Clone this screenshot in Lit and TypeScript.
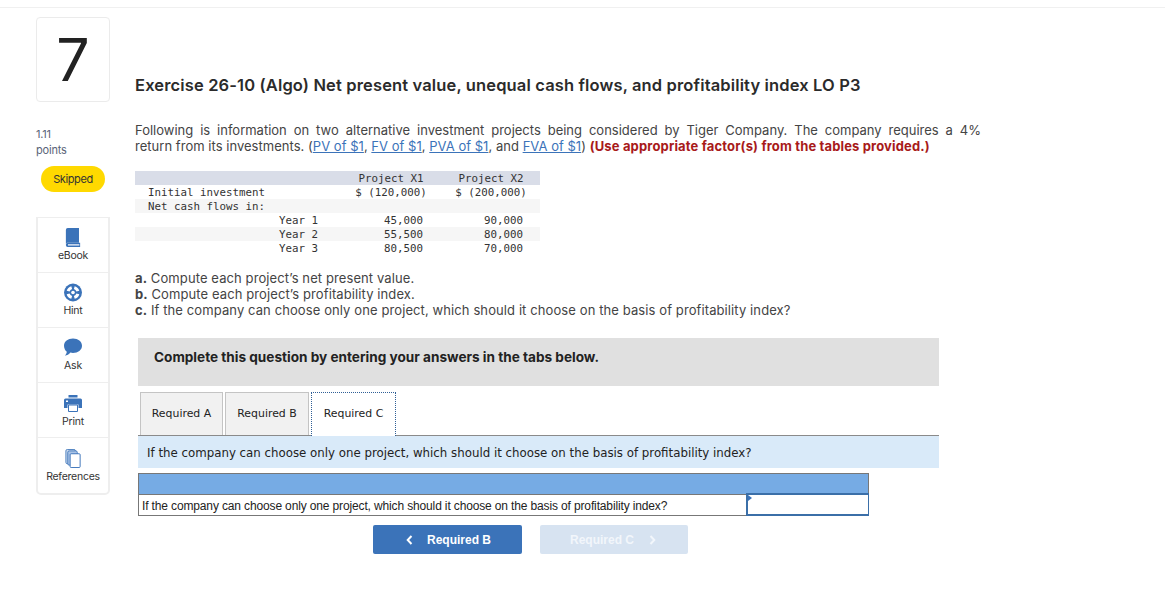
import { LitElement, html, css, svg } from "lit";
import { customElement } from "lit/decorators.js";

const hintWindow = "M15.300 10.700A6.500 6.500 0 0 1 10.700 15.300L9.910 12.380A3.500 3.500 0 0 0 12.380 9.910Z";

const icons: Record<string, unknown> = {
  eBook: svg`<svg width="16" height="20" viewBox="0 0 16 20"><path d="M.5 2a2 2 0 0 1 2-2h11.800v15.500H2.500a2 2 0 0 0-2 1.200z" fill="#3b73b9"/><path d="M.5 17.500a2 2 0 0 1 2-2h13V20H2.500a2 2 0 0 1-2-2z" fill="#3b73b9"/><path d="M2.700 17h12v1.500h-12z" fill="#dfe8f4"/></svg>`,
  Hint: svg`<svg width="18" height="18" viewBox="0 0 18 18"><circle cx="9" cy="9" r="9" fill="#3b73b9"/>${[0, 90, 180, 270].map((a) => svg`<path d=${hintWindow} transform="rotate(${a} 9 9)" fill="#fff"/>`)}<circle cx="9" cy="9" r="1.800" fill="#fff"/></svg>`,
  Ask: svg`<svg width="18" height="18" viewBox="0 0 18 18"><path d="M9 0c5 0 9 3 9 7.200s-4 7.200-9 7.200c-1 0-1.800-.1-2.600-.3C5 16 3 17 .8 17.300c1-1 1.800-2.300 2-4C1.200 12 0 9.800 0 7.200 0 3 4 0 9 0z" fill="#3b73b9"/></svg>`,
  Print: svg`<svg width="18" height="17" viewBox="0 0 18 17"><path d="M4.500 0h9v2.500h-9z" fill="#3b73b9"/><path d="M1.500 3.500h15A1.500 1.500 0 0 1 18 5v8h-3.500V9.500h-11V13H0V5a1.500 1.500 0 0 1 1.500-1.500z" fill="#3b73b9"/><path d="M2 5.500h2v1.500H2z" fill="#fff"/><path d="M4.500 10h9V16.500h-9z" fill="#fff" stroke="#3b73b9"/></svg>`,
  References: svg`<svg width="16" height="20" viewBox="0 0 16 20"><rect x=".5" y=".5" width="10" height="15" rx="1.500" fill="#cfdcee" stroke="#3b73b9" stroke-width=".9"/><rect x="2.500" y="2" width="10" height="15" rx="1.500" fill="#a9c3e6" stroke="#3b73b9" stroke-width=".9"/><rect x="5" y="5" width="10.500" height="14.500" rx="1" fill="#fff" stroke="#3b73b9"/></svg>`,
};

@customElement("app-root")
export class AppRoot extends LitElement {
  static styles = css`
    :host { display: block; font-family: "Inter", "Open Sans", sans-serif; color: #333; width: 1165px; height: 614px; overflow: hidden; background: #fff; }
    .page { margin-top: 7px; border-top: 1px solid #f0f0f0; display: flex; padding: 9px 0 0 36px; }
    .side { width: 74px; flex: none; margin-right: 25px; }
    .num { border: 1px solid #ebebeb; border-radius: 4px; display: flex; align-items: center; justify-content: center; font: 400 59px "Inter", "Liberation Sans", sans-serif; color: #222; box-sizing: border-box; height: 85px; }
    .pts { margin-top: 24px; font-size: 11px; line-height: 16px; color: #5a6478; letter-spacing: -.2px; }
    .pill { margin: 8px 0 0 5px; width: 64px; height: 26px; border-radius: 13px; background: #ffd900; font-size: 11px; letter-spacing: -.4px; display: flex; align-items: center; justify-content: center; color: #333; }
    .tools { margin-top: 25px; border: 2px solid #eee; border-top-width: 1px; border-radius: 0 0 5px 5px; box-sizing: border-box; height: 278px; }
    .tool { height: 55px; box-sizing: border-box; border-bottom: 1px solid #eee; display: flex; flex-direction: column; align-items: center; justify-content: flex-start; padding-top: 10px; font-size: 10.500px; letter-spacing: -.25px; line-height: 14px; color: #333; }
    .tool:nth-child(n + 4) { padding-top: 11px; }
    .tool:last-child { border-bottom: none; }
    .tool svg { display: block; height: 19px; margin-bottom: 2px; }
    .main { width: 846px; flex: none; }
    h1 { margin: 58px 0 0; font-size: 16.500px; line-height: 20px; font-weight: 600; color: #2b2b2b; white-space: nowrap; letter-spacing: .14px; }
    .intro { margin: 27px 0 0; font-size: 13px; line-height: 16px; color: #444; }
    .intro span { display: block; letter-spacing: .03px; }
    .intro .just { text-align: justify; text-align-last: justify; letter-spacing: 0; }
    .intro a { color: #3b73b9; }
    .intro b { color: #a81a1a; font-weight: 700; letter-spacing: .15px; }
    table.data { margin-top: 17px; border-collapse: collapse; width: 405px; table-layout: fixed; font: 10.800px/13px "DejaVu Sans Mono", "Liberation Mono", monospace; color: #333; }
    table.data td { padding: 1px 0 0; height: 14px; box-sizing: border-box; white-space: pre; }
    table.data tr.h { background: #d9dde8; }
    table.data tr.s { background: #f6f6f6; }
    .c1 { width: 13px; } .c2 { width: 131px; } .c3 { width: 65px; } .c4 { width: 94px; } .c5 { width: 102px; }
    table.data td.c4 { text-align: center; }
    table.data td.c5 { text-align: center; padding-left: 4px; }
    table.data td.r4 { text-align: right; padding-right: 15px; }
    table.data td.r5 { text-align: right; padding-right: 17px; }
    .qs { margin: 15px 0 0; font-size: 13px; line-height: 16px; color: #444; letter-spacing: .1px; }
    .qs b { font-weight: 700; }
    .band { margin: 20px 0 0 3px; width: 801px; height: 48px; background: #e0e0e0; display: flex; align-items: center; padding: 0 0 10px 16px; box-sizing: border-box; font: 700 13.600px "Inter", sans-serif; color: #222; }
    .tabs { margin: 5px 0 0 3px; width: 801px; display: flex; gap: 2px; border-bottom: 1px solid #8a8a8a; height: 45px; box-sizing: border-box; align-items: flex-end; padding-left: 2px; }
    .tab { width: 83px; height: 43px; box-sizing: border-box; border: 1px solid #c4c4c4; border-bottom: none; background: #f1f1f1; display: flex; align-items: center; justify-content: center; padding-bottom: 2px; font: 10.900px "DejaVu Sans", sans-serif; color: #222; }
    .tab:nth-child(2) { width: 84px; }
    .tab.on { width: 85px; height: 44px; background: #fff; border: 1px dotted #2f5f96; border-bottom: none; margin-bottom: -1px; }
    .ask { margin-left: 3px; width: 801px; height: 32px; background: #d9eaf9; display: flex; align-items: center; padding: 1px 0 0 9px; box-sizing: border-box; font: 11.800px "DejaVu Sans", sans-serif; color: #222; }
    table.ans { margin: 5px 0 0 3px; width: 730px; border-collapse: collapse; font: 12px "Liberation Sans", Arial, sans-serif; letter-spacing: -.14px; color: #222; table-layout: fixed; }
    table.ans td { border: 1px solid #777; padding: 0; }
    .hdr td { height: 19px; background: #76abe4; }
    .row td { height: 18px; white-space: nowrap; }
    table.ans .row td:first-child { padding: 2px 0 0 3px; }
    .col-a { width: 608px; } .col-b { width: 122px; }
    table.ans td.inp { position: relative; border: 2px solid #3b6fa8; border-right-width: 1px; }
    .mark { position: absolute; left: 0; top: 0; width: 0; height: 0; border-left: 4px solid #3b73b9; border-top: 3px solid transparent; border-bottom: 3px solid transparent; }
    .nav { margin: 9px 0 0 238px; display: flex; gap: 18px; }
    .btn { width: 149px; height: 29px; border-radius: 2px; background: #3b73b9; color: #fff; font: 700 12px "Liberation Sans", Arial, sans-serif; display: flex; align-items: center; justify-content: center; gap: 14px; padding-left: 2px; box-sizing: border-box; }
    .btn.off { background: #d7e3f1; width: 148px; color: #f2f6fb; padding: 0 2px 0 0; gap: 15px; }
    .btn svg { display: block; }
  `;

  render() {
    return html`<div class="page">
      <aside class="side">
        <div class="num">7</div>
        <div class="pts">1.11<br />points</div>
        <div class="pill">Skipped</div>
        <div class="tools">
          ${Object.keys(icons).map((k) => html`<div class="tool">${icons[k]}<span>${k}</span></div>`)}
        </div>
      </aside>
      <main class="main">
        <h1>Exercise 26-10 (Algo) Net present value, unequal cash flows, and profitability index LO P3</h1>
        <p class="intro"><span class="just">Following is information on two alternative investment projects being considered by Tiger Company. The company requires a 4%</span><span>return from its investments. (<a href="#">PV of $1</a>, <a href="#">FV of $1</a>, <a href="#">PVA of $1</a>, and <a href="#">FVA of $1</a>) <b>(Use appropriate factor(s) from the tables provided.)</b></span></p>
        <table class="data">
          <colgroup><col class="c1" /><col class="c2" /><col class="c3" /><col class="c4" /><col class="c5" /></colgroup>
          <tr class="h"><td></td><td></td><td></td><td class="c4">Project X1</td><td class="c5">Project X2</td></tr>
          <tr><td></td><td>Initial investment</td><td></td><td class="c4">$ (120,000)</td><td class="c5">$ (200,000)</td></tr>
          <tr class="s"><td></td><td>Net cash flows in:</td><td></td><td></td><td></td></tr>
          ${[["Year 1","45,000","90,000",""],["Year 2","55,500","80,000","s"],["Year 3","80,500","70,000",""]].map((r) => html`<tr class=${r[3]}><td></td><td></td><td>${r[0]}</td><td class="r4">${r[1]}</td><td class="r5">${r[2]}</td></tr>`)}
        </table>
        <div class="qs">
          <div><b>a.</b> Compute each project’s net present value.</div>
          <div><b>b.</b> Compute each project’s profitability index.</div>
          <div><b>c.</b> If the company can choose only one project, which should it choose on the basis of profitability index?</div>
        </div>
        <div class="band">Complete this question by entering your answers in the tabs below.</div>
        <div class="tabs">
          <div class="tab">Required A</div><div class="tab">Required B</div><div class="tab on">Required C</div>
        </div>
        <div class="ask">If the company can choose only one project, which should it choose on the basis of profitability index?</div>
        <table class="ans">
          <colgroup><col class="col-a" /><col class="col-b" /></colgroup>
          <tr class="hdr"><td colspan="2"></td></tr>
          <tr class="row"><td>If the company can choose only one project, which should it choose on the basis of profitability index?</td><td class="inp"><span class="mark"></span></td></tr>
        </table>
        <div class="nav">
          <div class="btn"><svg width="7" height="10" viewBox="0 0 7 10"><path d="M5.500 1 1.700 5l3.800 4" fill="none" stroke="#fff" stroke-width="2"/></svg>Required B</div>
          <div class="btn off">Required C<svg width="7" height="10" viewBox="0 0 7 10"><path d="M1.500 1l3.800 4-3.800 4" fill="none" stroke="#f2f6fb" stroke-width="2"/></svg></div>
        </div>
      </main>
    </div>`;
  }
}
